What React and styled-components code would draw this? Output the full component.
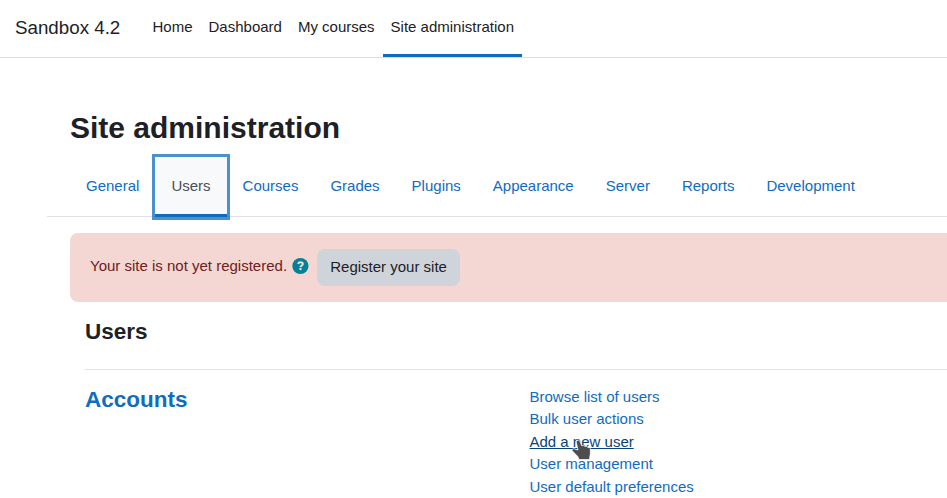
import React from "react";
import styled, { createGlobalStyle, css } from "styled-components";

const GlobalStyle = createGlobalStyle`
  *, *::before, *::after { box-sizing: border-box; }
  html, body { margin: 0; height: 498px; overflow: hidden; background: #fff; }
  body {
    font-family: "Liberation Sans", Arial, sans-serif;
    font-size: 15px;
    line-height: 22.5px;
    color: #1d2125;
  }
`;

const Page = styled.div`
  width: 947px;
  height: 498px;
  overflow: hidden;
`;

const Navbar = styled.header`
  display: flex;
  height: 58px;
  padding-left: 15px;
  border-bottom: 1px solid #dcdddd;
`;

const Brand = styled.a`
  width: 129.5px;
  padding-top: 13.5px;
  font-size: 18.75px;
  line-height: 28px;
  white-space: nowrap;
`;

const NavLink = styled.a`
  padding: 16px 8px 0;
  border-bottom: 3px solid ${(p) => (p.$active ? "#0f6cbf" : "transparent")};
  white-space: nowrap;
`;

const Title = styled.h1`
  margin: 52px 0 0 70px;
  height: 47px;
  font-size: 30px;
  line-height: 36px;
  font-weight: 700;
`;

const Tabs = styled.nav`
  display: flex;
  height: 60px;
  margin-left: 47px;
  padding-left: 23px;
  box-shadow: inset 0 -1px 0 #dee2e6;
`;

const Tab = styled.a`
  padding: 18px 16px 0;
  color: #0f6cbf;
  white-space: nowrap;
  ${(p) =>
    p.$active &&
    css`
      color: #495057;
      background: #f8f9fa;
      border-bottom: 3px solid #0f6cbf;
      box-shadow: 0 0 0 3px rgba(15, 108, 191, 0.75);
    `}
`;

const Alert = styled.div`
  display: flex;
  align-items: flex-start;
  height: 69px;
  margin: 16px 0 0 70px;
  padding: 16px 20px;
  border-radius: 8px 0 0 8px;
  background: #f4d6d2;
  color: #6e211e;
`;

const AlertText = styled.span`
  padding-top: 6px;
  white-space: nowrap;
`;

const HelpIcon = styled.svg`
  width: 17px;
  height: 18px;
  margin: 8px 8px 0 5px;
  flex: none;
`;

const Button = styled.button`
  width: 143px;
  height: 37px;
  padding: 0;
  border: 0;
  border-radius: 8px;
  background: #ced4da;
  color: #1d2125;
  font: inherit;
`;

const Content = styled.main`
  padding-left: 85px;
`;

const SectionTitle = styled.h2`
  margin: 0;
  padding-top: 16px;
  height: 67px;
  font-size: 22.5px;
  line-height: 27px;
  font-weight: 700;
`;

const Category = styled.section`
  display: grid;
  grid-template-columns: 444.5px 1fr;
  padding-top: 16px;
  border-top: 1px solid #e2e3e3;
`;

const CategoryTitle = styled.h3`
  margin: 0;
  font-size: 22.5px;
  line-height: 27px;
  font-weight: 700;
  color: #0f6cbf;
`;

const LinkList = styled.ul`
  margin: -0.2px 0 0;
  padding: 0;
  list-style: none;
`;

const LinkItem = styled.li`
  position: relative;
  height: 22.5px;
`;

const Link = styled.a`
  color: ${(p) => (p.$hovered ? "#094478" : "#0f6cbf")};
  text-decoration: ${(p) => (p.$hovered ? "underline" : "none")};
`;

const Pointer = styled.svg`
  position: absolute;
  left: 40px;
  top: 8px;
  width: 24px;
  height: 24px;
`;

const HandPointer = () => (
  <Pointer viewBox="0 0 24 24" aria-hidden="true">
    <path
      d="M7.2 1.4C8.4 0.9 9.6 1.3 10 2.4L11.6 6.6H13.6L14.6 7.4H16.8L17.8 8.4H19.4L20.3 9.6V15L19.4 20.5H9L7.8 17.5L2.2 11.8C1.8 10.6 2.6 9.7 3.9 9.7L8 11L6.4 3.8C6.1 2.7 6.4 1.8 7.2 1.4Z"
      fill="#4d4d4d"
      stroke="#fff"
      strokeWidth="0.7"
      strokeLinejoin="round"
    />
  </Pointer>
);

const navItems = ["Home", "Dashboard", "My courses", "Site administration"];
const tabs = ["General", "Users", "Courses", "Grades", "Plugins", "Appearance", "Server", "Reports", "Development"];
const links = ["Browse list of users", "Bulk user actions", "Add a new user", "User management", "User default preferences"];

export default function App() {
  return (
    <Page>
      <GlobalStyle />
      <Navbar>
        <Brand>Sandbox 4.2</Brand>
        {navItems.map((item) => (
          <NavLink key={item} $active={item === "Site administration"}>{item}</NavLink>
        ))}
      </Navbar>
      <Title>Site administration</Title>
      <Tabs>
        {tabs.map((tab) => (
          <Tab key={tab} $active={tab === "Users"}>{tab}</Tab>
        ))}
      </Tabs>
      <Alert>
        <AlertText>Your site is not yet registered.</AlertText>
        <HelpIcon viewBox="0 -0.5 17 18" aria-label="Help">
          <circle cx="8.4" cy="8.5" r="8.1" fill="#008196" />
          <path
            d="M6 6.3C6.4 5.2 7.2 4.8 8.5 4.8C9.9 4.8 10.8 5.5 10.8 6.5C10.8 8 8.5 8 8.5 9.7"
            fill="none"
            stroke="#f4d6d2"
            strokeWidth="2.1"
          />
          <rect x="7.4" y="10.6" width="2.2" height="2" fill="#f4d6d2" />
        </HelpIcon>
        <Button>Register your site</Button>
      </Alert>
      <Content>
        <SectionTitle>Users</SectionTitle>
        <Category>
          <CategoryTitle>Accounts</CategoryTitle>
          <LinkList>
            {links.map((link) => (
              <LinkItem key={link}>
                <Link $hovered={link === "Add a new user"}>{link}</Link>
                {link === "Add a new user" && <HandPointer />}
              </LinkItem>
            ))}
          </LinkList>
        </Category>
      </Content>
    </Page>
  );
}
